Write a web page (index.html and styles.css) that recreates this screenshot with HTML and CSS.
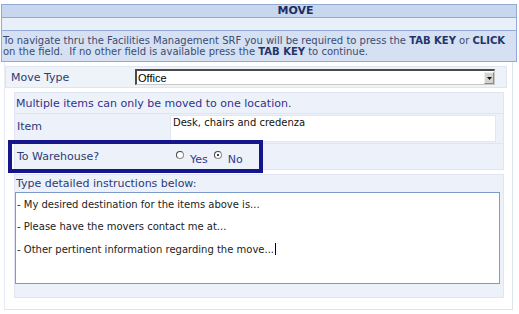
FILE: index.html
```html
<!DOCTYPE html>
<html>
<head>
<meta charset="utf-8">
<link rel="stylesheet" href="styles.css">
</head>
<body>
<div class="page">
  <div class="title">MOVE</div>
  <div class="blank"></div>
  <div class="info">To navigate thru the Facilities Management SRF you will be required to press the <b>TAB KEY</b> or <b>CLICK</b><br>on the field.&nbsp; If no other field is available press the <b>TAB KEY</b> to continue.</div>
  <div class="form">
    <div class="movetype">
      <div class="label">Move Type</div>
      <div class="select"><span>Office</span><span class="arrow"><svg width="5" height="3" viewBox="0 0 5 3"><path d="M0 0h5L2.5 3z" fill="#111"/></svg></span></div>
    </div>
    <div class="group">
      <div class="note">Multiple items can only be moved to one location.</div>
      <div class="item">
        <div class="label">Item</div>
        <div class="field">Desk, chairs and credenza</div>
      </div>
      <div class="wh">
        <div class="whcell">
          <div class="label">To Warehouse?</div>
          <div class="radios">
            <span class="radio"></span><span class="rl">Yes</span>
            <span class="radio on"></span><span class="rl">No</span>
          </div>
        </div>
      </div>
    </div>
    <div class="group detail">
      <div class="note2">Type detailed instructions below:</div>
      <div class="textarea">
        <p>- My desired destination for the items above is...</p>
        <p>- Please have the movers contact me at...</p>
        <p>- Other pertinent information regarding the move...<span class="caret"></span></p>
      </div>
    </div>
  </div>
</div>
</body>
</html>
```
FILE: styles.css
```css
* { box-sizing: border-box; }
body { margin: 0; background: #fff; font-family: "DejaVu Sans", Verdana, sans-serif; font-size: 11px; }
.page { width: 519px; padding-top: 4px; }
.title { width: 516px; height: 14px; margin-left: 1px; background: #c7d7ee; border: 1px solid #92abd5; text-align: center; font-weight: bold; color: #1e2d62; line-height: 12px; font-size: 11px; padding-left: 73px; }
.blank { width: 516px; height: 12px; margin-left: 1px; background: #e9eff9; border-left: 1px solid #92abd5; border-right: 1px solid #92abd5; }
.info { width: 516px; height: 32px; margin-left: 1px; background: #d5e1f2; border: 1px solid #92abd5; color: #3b4c72; font-size: 10px; line-height: 11px; padding: 4px 1px 0 1px; white-space: nowrap; overflow: hidden; }
.info b { color: #24346a; }
.form { width: 509px; margin-left: 4px; padding: 4px 0 11px 0; border-left: 1px solid #e6ebf4; border-right: 1px solid #dde4f0; border-bottom: 1px solid #dde4f0; }
.label { color: #2a3c78; }
.movetype { display: flex; align-items: center; width: 502px; height: 22px; background: #eef2f9; border: 1px solid #dfe6f1; padding: 0 11px 0 5px; }
.movetype .label { width: 124px; }
.select { flex: 1; height: 16px; background: #fff; border-top: 2px solid #4a4a4a; border-left: 2px solid #4a4a4a; border-right: 1px solid #c8c8c8; border-bottom: 1px solid #c8c8c8; display: flex; align-items: center; justify-content: space-between; font-family: "Liberation Sans", Arial, sans-serif; font-size: 11px; color: #000; padding-left: 1px; }
.arrow { width: 10px; height: 12px; background: #d6d3cc; border: 1px solid #8a8a8a; border-top-color: #eee; border-left-color: #eee; display: flex; align-items: center; justify-content: center; margin-top: 1px; }
.group { margin: 4px 8px 0 9px; background: #edf1f9; border: 1px solid #dfe6f1; }
.note { color: #30318f; height: 21px; line-height: 12px; padding: 5px 0 0 1px; border-bottom: 1px solid #dfe5f0; }
.item { display: flex; height: 30px; border-bottom: 1px solid #dfe5f0; }
.item .label { width: 155px; padding: 7px 0 0 2px; line-height: 12px; }
.field { flex: 1; margin: 1px 7px 1px 0; background: #fff; border: 1px solid #e2e7ef; padding: 1px 2px; color: #111; font-size: 10px; line-height: 12px; }
.wh { height: 25px; }
.whcell { display: flex; align-items: center; width: 247px; height: 25px; margin-left: -3px; outline: 4px solid #15168b; }
.whcell .label { width: 164px; padding-left: 5px; }
.radios { display: flex; align-items: center; color: #2d3b8e; }
.radio { width: 8px; height: 8px; border-radius: 50%; border: 1px solid #8a8a8a; border-top-color: #444; border-left-color: #444; background: #fff; position: relative; margin-right: 6px; margin-top: -3px; }
.radio.on::after { content: ""; position: absolute; left: 2px; top: 2px; width: 2px; height: 2px; border-radius: 50%; background: #000; }
.rl { margin-right: 6px; margin-top: 5px; }
.detail { padding: 3px 3px 13px 0; }
.note2 { color: #2a3c78; line-height: 12px; height: 14px; padding-left: 1px; }
.textarea { height: 92px; background: #fff; border: 1px solid #7d9bc9; padding: 6px 1px 0 1px; color: #222; font-size: 10px; }
.textarea p { margin: 0 0 10px 0; line-height: 12px; }
.caret { display: inline-block; width: 1px; height: 12px; background: #000; vertical-align: -2px; margin-left: 1px; }
```
